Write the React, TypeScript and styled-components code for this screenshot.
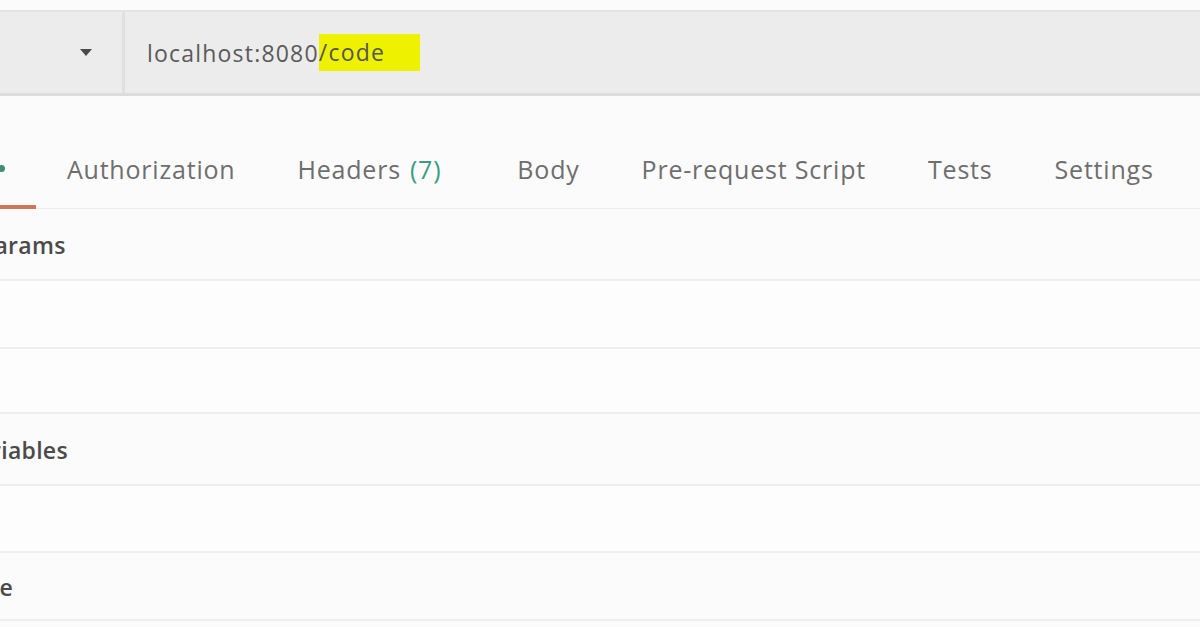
import React from "react";
import styled, { createGlobalStyle } from "styled-components";

const Global = createGlobalStyle`
  html, body { margin: 0; padding: 0; background: #fbfbfb; }
  body { font-family: "Open Sans", "Noto Sans", sans-serif; overflow: hidden; }
`;

const Page = styled.div`
  width: 1200px;
  height: 627px;
  overflow: hidden;
  background: #fbfbfb;
  display: flex;
  flex-direction: column;
  padding-top: 10px;
  box-sizing: border-box;
`;

const UrlBar = styled.div`
  height: 86px;
  box-sizing: border-box;
  display: flex;
  align-items: stretch;
  background: #ececec;
  border-top: 2px solid #e3e3e3;
  border-bottom: 3px solid #dcdcdc;
`;

const MethodSelect = styled.div`
  width: 125px;
  display: flex;
  align-items: center;
  justify-content: flex-end;
  padding-right: 30px;
  box-sizing: border-box;
  border-right: 3px solid #e0e0e0;
`;

const Caret = styled.span`
  width: 0;
  height: 0;
  border-left: 6px solid transparent;
  border-right: 6px solid transparent;
  border-top: 7px solid #4a4a4a;
`;

const UrlText = styled.div`
  display: flex;
  align-items: center;
  padding-left: 22px;
  font-size: 23px;
  color: #5a5a5a;
  letter-spacing: 1.2px;
  white-space: nowrap;
`;

const Highlight = styled.span`
  background: #eef200;
  color: #555;
  padding: 2px 35px 3px 0;
`;

const TabRow = styled.div`
  margin-top: 34px;
  height: 78px;
  display: flex;
  align-items: stretch;
  border-bottom: 1px solid #ececec;
  margin-left: -134px;
`;

const Tab = styled.div<{ $active?: boolean; $extra?: number }>`
  flex: none;
  display: flex;
  align-items: center;
  white-space: nowrap;
  padding: 2px ${(p) => 31 + (p.$extra ?? 0)}px 0 31px;
  font-size: 25px;
  color: #6e6e6e;
  letter-spacing: 0.8px;
  border-bottom: 4px solid ${(p) => (p.$active ? "#d0775a" : "transparent")};
  margin-bottom: -1px;
`;

const Dot = styled.span`
  width: 7px;
  height: 7px;
  border-radius: 50%;
  background: #3f8f73;
  margin-left: 8px;
`;

const Count = styled.span`
  color: #3a9c84;
  margin-left: 9px;
`;

const Section = styled.div`
  display: flex;
  flex-direction: column;
`;

const Heading = styled.div<{ $h: number }>`
  height: ${(p) => p.$h}px;
  display: flex;
  align-items: center;
  white-space: nowrap;
  padding-top: 2px;
  margin-left: -96px;
  font-size: 23px;
  font-weight: 600;
  letter-spacing: 0.3px;
  color: #4a4a4a;
  border-bottom: 2px solid #eeeeee;
  box-sizing: border-box;
`;

const Row = styled.div<{ $h: number }>`
  height: ${(p) => p.$h}px;
  border-bottom: 2px solid #efefef;
  box-sizing: border-box;
  background: #fdfdfd;
`;

export default function App() {
  return (
    <>
      <Global />
      <Page>
        <UrlBar>
          <MethodSelect>
            <Caret />
          </MethodSelect>
          <UrlText>
            localhost:8080<Highlight>/code</Highlight>
          </UrlText>
        </UrlBar>
        <TabRow>
          <Tab $active>
            Params<Dot />
          </Tab>
          <Tab>Authorization</Tab>
          <Tab $extra={14}>
            Headers<Count>(7)</Count>
          </Tab>
          <Tab>Body</Tab>
          <Tab>Pre-request Script</Tab>
          <Tab>Tests</Tab>
          <Tab>Settings</Tab>
        </TabRow>
        <Section>
          <Heading $h={72}>Query Params</Heading>
          <Row $h={68} />
          <Row $h={65} />
        </Section>
        <Section>
          <Heading $h={72}>Path Variables</Heading>
          <Row $h={67} />
        </Section>
        <Section>
          <Heading $h={68}>Response</Heading>
        </Section>
      </Page>
    </>
  );
}
